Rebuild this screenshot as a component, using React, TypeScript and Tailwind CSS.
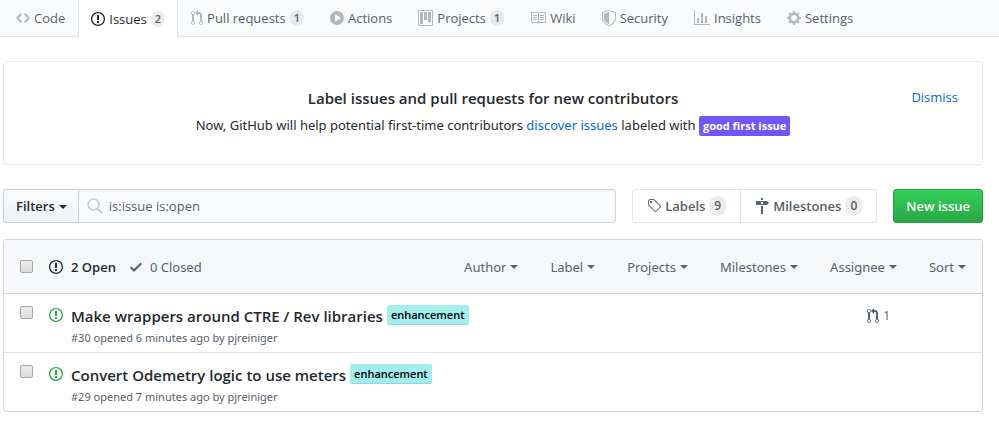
import type { ReactNode } from "react";

type IconShape = { w: number; d: string };

const icons = {
  code: { w: 14, d: "M9.5 3L8 4.5 11.5 8 8 11.5 9.5 13 14 8 9.5 3zm-5 0L0 8l4.5 5L6 11.5 2.5 8 6 4.5 4.5 3z" },
  issue: { w: 14, d: "M7 2.3c3.14 0 5.7 2.56 5.7 5.7s-2.56 5.7-5.7 5.7A5.71 5.71 0 011.3 8c0-3.14 2.56-5.7 5.7-5.7zM7 1C3.14 1 0 4.14 0 8s3.14 7 7 7 7-3.14 7-7-3.14-7-7-7zm1 3H6v5h2V4zm0 6H6v2h2v-2z" },
  pull: { w: 12, d: "M11 11.28V5c-.03-.78-.34-1.47-.94-2.06C9.46 2.35 8.78 2.03 8 2H7V0L4 3l3 3V4h1c.27.02.48.11.69.31.21.2.3.42.31.69v6.28A1.993 1.993 0 0010 15a1.993 1.993 0 001-3.72zm-1 2.92c-.66 0-1.2-.55-1.2-1.2 0-.65.55-1.2 1.2-1.2.65 0 1.2.55 1.2 1.2 0 .65-.55 1.2-1.2 1.2zM4 3c0-1.11-.89-2-2-2a1.993 1.993 0 00-1 3.72v6.56A1.993 1.993 0 002 15a1.993 1.993 0 001-3.72V4.72c.59-.34 1-.98 1-1.72zm-.8 10c0 .66-.55 1.2-1.2 1.2-.65 0-1.2-.55-1.2-1.2 0-.65.55-1.2 1.2-1.2.65 0 1.2.55 1.2 1.2zM2 4.2C1.34 4.2.8 3.65.8 3c0-.65.55-1.2 1.2-1.2.65 0 1.2.55 1.2 1.2 0 .65-.55 1.2-1.2 1.2z" },
  play: { w: 14, d: "M14 8A7 7 0 110 8a7 7 0 0114 0zm-8.223 3.482l4.599-3.066a.5.5 0 000-.832L5.777 4.518A.5.5 0 005 4.934v6.132a.5.5 0 00.777.416z" },
  project: { w: 15, d: "M10 12h3V2h-3v10zm-4-2h3V2H6v8zm-4 4h3V2H2v12zm-1 1h13V1H1v14zM14 0H1a1 1 0 00-1 1v14a1 1 0 001 1h13a1 1 0 001-1V1a1 1 0 00-1-1z" },
  book: { w: 16, d: "M3 5h4v1H3V5zm0 3h4V7H3v1zm0 2h4V9H3v1zm11-5h-4v1h4V5zm0 2h-4v1h4V7zm0 2h-4v1h4V9zm2-6v9c0 .55-.45 1-1 1H9.5l-1 1-1-1H2c-.55 0-1-.45-1-1V3c0-.55.45-1 1-1h5.5l1 1 1-1H15c.55 0 1 .45 1 1zm-8 .5L7.5 3H2v9h6V3.5zm7-.5H9.5l-.5.5V12h6V3z" },
  shield: { w: 14, d: "M0 2l7-2 7 2v6.02C14 12.69 8.69 16 7 16c-1.69 0-7-3.31-7-7.98V2zm1 .75L7 1l6 1.75v5.268C13 12.104 8.449 15 7 15c-1.449 0-6-2.896-6-6.982V2.75zm1 .75L7 2v12c-1.207 0-5-2.482-5-5.985V3.5z" },
  graph: { w: 16, d: "M16 14v1H0V0h1v14h15zM5 13H3V8h2v5zm4 0H7V3h2v10zm4 0h-2V6h2v7z" },
  gear: { w: 14, d: "M14 8.77v-1.6l-1.94-.64-.45-1.09.88-1.84-1.13-1.13-1.81.91-1.09-.45-.69-1.92h-1.6l-.63 1.94-1.11.45-1.84-.88-1.13 1.13.91 1.81-.45 1.09L0 7.23v1.59l1.94.64.45 1.09-.88 1.84 1.13 1.13 1.81-.91 1.09.45.69 1.92h1.59l.63-1.94 1.11-.45 1.84.88 1.13-1.13-.92-1.81.47-1.09L14 8.75v.02zM7 11c-1.66 0-3-1.34-3-3s1.34-3 3-3 3 1.34 3 3-1.34 3-3 3z" },
  check: { w: 12, d: "M12 5l-8 8-4-4 1.5-1.5L4 10l6.5-6.5L12 5z" },
  tag: { w: 14, d: "M7.73 1.73C7.26 1.26 6.62 1 5.96 1H3.5C2.13 1 1 2.13 1 3.5v2.47c0 .66.27 1.3.73 1.77l6.06 6.06c.39.39 1.02.39 1.41 0l4.59-4.59a.996.996 0 000-1.41L7.73 1.73zM2.38 7.09c-.31-.3-.47-.7-.47-1.13V3.5c0-.88.72-1.59 1.59-1.59h2.47c.42 0 .83.16 1.13.47l6.14 6.13-4.73 4.73-6.13-6.15zM3.01 3h2v2H3V3h.01z" },
  milestone: { w: 14, d: "M8 2H6V0h2v2zm4 5H2c-.55 0-1-.45-1-1V4c0-.55.45-1 1-1h10l2 2-2 2zM8 4H6v2h2V4zM6 16h2V8H6v8z" },
} satisfies Record<string, IconShape>;

type IconName = keyof typeof icons;

function Icon({ name, className = "" }: { name: IconName; className?: string }) {
  const { w, d } = icons[name];
  return (
    <svg width={w} height={16} viewBox={`0 0 ${w} 16`} fill="currentColor" fillRule="evenodd" aria-hidden="true" className={`shrink-0 ${className}`}>
      <path d={d} />
    </svg>
  );
}

function Counter({ children, large = false }: { children: ReactNode; large?: boolean }) {
  return (
    <span
      className={
        large
          ? "rounded-full bg-[#1b1f23]/8 px-[5px] text-xs leading-5 font-semibold text-[#586069]"
          : "rounded-full bg-[#1b1f23]/8 px-1 text-[11px] leading-4 font-semibold text-[#586069]"
      }
    >
      {children}
    </span>
  );
}

function Caret() {
  return <span className="mt-px border-x-4 border-t-4 border-x-transparent border-t-current" />;
}

function Checkbox({ label }: { label: string }) {
  return (
    <input
      type="checkbox"
      aria-label={label}
      className="size-[13px] shrink-0 appearance-none rounded-xs border border-[#a6a6a6] bg-linear-to-b from-[#ededed] to-[#dcdcdc] checked:bg-[#0366d6]"
    />
  );
}

const tabs: { label: string; icon: IconName; count?: number; active?: boolean }[] = [
  { label: "Code", icon: "code" },
  { label: "Issues", icon: "issue", count: 2, active: true },
  { label: "Pull requests", icon: "pull", count: 1 },
  { label: "Actions", icon: "play" },
  { label: "Projects", icon: "project", count: 1 },
  { label: "Wiki", icon: "book" },
  { label: "Security", icon: "shield" },
  { label: "Insights", icon: "graph" },
  { label: "Settings", icon: "gear" },
];

const filters = ["Author", "Label", "Projects", "Milestones", "Assignee", "Sort"];

const issues = [
  { title: "Make wrappers around CTRE / Rev libraries", number: 30, minutes: 6, pulls: 1 },
  { title: "Convert Odemetry logic to use meters", number: 29, minutes: 7, pulls: 0 },
];

export default function App() {
  return (
    <div className="bg-white font-['Open_Sans','Noto_Sans',sans-serif] text-[13px] leading-5 text-[#24292e]">
      <nav aria-label="Repository" className="flex h-[37px] border-b border-[#e1e4e8] bg-[#fafbfc] pl-[3px]">
        {tabs.map((tab) => (
          <a
            key={tab.label}
            href="#"
            aria-current={tab.active ? "page" : undefined}
            className={
              tab.active
                ? "-mb-px flex items-center gap-1 border-x border-[#e1e4e8] bg-white px-3 text-[#24292e]"
                : "flex items-center gap-1 px-[13px] text-[#586069]"
            }
          >
            <Icon name={tab.icon} className={tab.active ? "" : "text-[#b4b7ba]"} />
            {tab.label}
            {tab.count !== undefined && <Counter>{tab.count}</Counter>}
          </a>
        ))}
      </nav>

      <main className="pt-6 pr-4 pl-[3px]">
        <section className="relative rounded-[3px] border border-[#eaecef] px-6 pt-6 pb-7 text-center">
          <button type="button" className="absolute top-[25px] right-6 text-[#0366d6]">
            Dismiss
          </button>
          <h2 className="text-[15px] leading-6 font-semibold">Label issues and pull requests for new contributors</h2>
          <p className="mt-1 font-['Noto_Sans',sans-serif] leading-[22px]">
            Now, GitHub will help potential first-time contributors{" "}
            <a href="#" className="text-[#0366d6]">discover issues</a> labeled with{" "}
            <span className="inline-block rounded-xs bg-[#7057ff] px-1 font-['Open_Sans',sans-serif] text-[11px] leading-5 font-bold text-white">
              good first issue
            </span>
          </p>
        </section>

        <div className="mt-6 flex h-[34px] gap-4">
          <form className="flex grow" role="search">
            <button
              type="button"
              aria-haspopup="menu"
              className="flex items-center gap-1 rounded-l-[3px] border border-r-0 border-[#c9cdd1] bg-linear-to-b from-[#fafbfc] to-[#eff3f6] pr-[11px] pl-3 font-semibold"
            >
              Filters <Caret />
            </button>
            <label className="flex grow items-center gap-[6px] rounded-r-[3px] border border-[#d1d5da] bg-[#fafbfc] px-2 shadow-[inset_0_1px_2px_rgba(27,31,35,0.075)]">
              <svg width="16" height="16" viewBox="0 0 16 16" fill="none" stroke="#c6cbd1" strokeWidth="1.5" aria-hidden="true">
                <circle cx="6.5" cy="6.5" r="5.5" />
                <path d="M10.5 10.5l4.5 4.5" strokeWidth="2" />
              </svg>
              <input
                type="text"
                aria-label="Search all issues"
                defaultValue="is:issue is:open"
                className="grow bg-transparent text-[#586069] outline-none"
              />
            </label>
          </form>

          <div className="flex rounded-[3px] border border-[#e1e4e8] font-semibold text-[#586069]">
            <a href="#" className="flex items-center gap-1 px-[14px]">
              <Icon name="tag" /> Labels <Counter large>9</Counter>
            </a>
            <a href="#" className="flex items-center gap-1 border-l border-[#e1e4e8] px-[14px]">
              <Icon name="milestone" /> Milestones <Counter large>0</Counter>
            </a>
          </div>

          <button
            type="button"
            className="rounded-[3px] border border-[#269f42] bg-linear-to-b from-[#34d058] to-[#28a745] px-3 font-semibold text-white"
          >
            New issue
          </button>
        </div>

        <section className="mt-4 rounded-[3px] border border-[#d1d5da]">
          <div className="flex h-[54px] items-center border-b border-[#d1d5da] bg-[#f6f8fa] px-4">
            <Checkbox label="Select all issues" />
            <a href="#" className="ml-4 flex items-center gap-2 font-semibold">
              <Icon name="issue" /> 2 Open
            </a>
            <a href="#" className="ml-[14px] flex items-center gap-2 font-['Noto_Sans',sans-serif] text-[#586069]">
              <Icon name="check" /> 0 Closed
            </a>
            <div className="ml-auto flex gap-8 font-['Noto_Sans',sans-serif]">
              {filters.map((filter) => (
                <button key={filter} type="button" aria-haspopup="menu" className="flex items-center gap-1 text-[#586069]">
                  {filter} <Caret />
                </button>
              ))}
            </div>
          </div>

          <ul className="divide-y divide-[#e1e4e8]">
            {issues.map((issue) => (
              <li key={issue.number} className="flex px-4 pt-3 pb-1">
                <Checkbox label={`Select issue ${issue.number}`} />
                <Icon name="issue" className="mt-px ml-4 text-[#28a745]" />
                <div className="ml-2 grow">
                  <div className="flex gap-1">
                    <a href="#" className="text-[15px] leading-5 font-semibold">{issue.title}</a>
                    <a href="#" className="-mt-px h-5 rounded-xs bg-[#a2eeef] px-1 text-[11px] leading-5 font-semibold text-black shadow-[inset_0_-1px_0_rgba(27,31,35,0.12)]">
                      enhancement
                    </a>
                  </div>
                  <p className="mt-0.5 font-['Noto_Sans',sans-serif] text-[11px] leading-5 text-[#586069]">
                    #{issue.number} opened {issue.minutes} minutes ago by <a href="#">pjreiniger</a>
                  </p>
                </div>
                {issue.pulls > 0 && (
                  <a href="#" className="mr-[76px] flex h-5 items-center gap-1 text-xs text-[#586069]">
                    <Icon name="pull" /> {issue.pulls}
                  </a>
                )}
              </li>
            ))}
          </ul>
        </section>
      </main>
    </div>
  );
}
